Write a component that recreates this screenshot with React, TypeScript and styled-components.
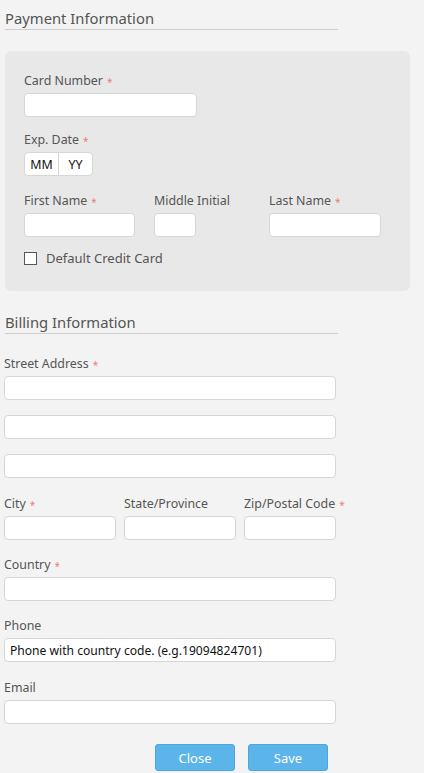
import React from "react";
import styled, { createGlobalStyle } from "styled-components";

const Global = createGlobalStyle`
  html, body { margin: 0; padding: 0; background: #f3f3f3; }
  body { font-family: "Segoe UI", "Noto Sans", "Open Sans", sans-serif; color: #555; }
  * { box-sizing: border-box; }
`;

const Page = styled.div`
  width: 424px;
  padding: 8px 0 0 0;
`;

const SectionTitle = styled.div`
  margin-left: 5px;
  width: 333px;
  font-size: 14.8px;
  color: #555;
  line-height: 20px;
  padding-bottom: 1px;
  border-bottom: 1px solid #cfcfcf;
`;

const Panel = styled.div`
  margin: 21px 0 0 5px;
  width: 405px;
  background: #e8e8e8;
  border-radius: 6px;
  padding: 22px 19px 24px 19px;
  display: flex;
  flex-direction: column;
`;

const Billing = styled.div`
  margin-top: 21px;
`;

const BillingBody = styled.div`
  padding: 22px 0 0 4px;
  display: flex;
  flex-direction: column;
`;

const Field = styled.div<{ $w?: number; $mt?: number }>`
  display: flex;
  flex-direction: column;
  width: ${(p) => (p.$w ? `${p.$w}px` : "auto")};
  margin-top: ${(p) => p.$mt ?? 0}px;
`;

const Label = styled.label`
  display: flex;
  align-items: center;
  font-size: 12.4px;
  line-height: 16px;
  height: 16px;
  margin-bottom: 4px;
  color: #555;
  white-space: nowrap;
`;

const Req = styled.span`
  color: #f07b7b;
  font-size: 10px;
  line-height: 10px;
  margin-left: 4px;
  position: relative;
  top: 1px;
`;

const Input = styled.input<{ $w: number }>`
  width: ${(p) => p.$w}px;
  height: 24px;
  border: 1px solid #d6d6d6;
  border-radius: 4px;
  background: #fff;
  font-family: "Segoe UI", "Noto Sans", "Open Sans", sans-serif;
  font-size: 12.1px;
  color: #111;
  padding: 0 5px;
  outline: none;
  &::placeholder { color: #111; }
`;

const Row = styled.div<{ $gap: number; $mt: number }>`
  display: flex;
  gap: ${(p) => p.$gap}px;
  margin-top: ${(p) => p.$mt}px;
`;

const ExpBox = styled.div`
  display: flex;
  width: 69px;
  height: 24px;
  border: 1px solid #d6d6d6;
  border-radius: 4px;
  background: #fff;
  overflow: hidden;
`;

const ExpPart = styled.div<{ $divider?: boolean }>`
  flex: 1;
  display: flex;
  align-items: center;
  justify-content: center;
  font-size: 12.4px;
  color: #111;
  border-right: ${(p) => (p.$divider ? "1px solid #d6d6d6" : "none")};
`;

const CheckRow = styled.label`
  display: flex;
  align-items: center;
  gap: 9px;
  margin-top: 12px;
  font-size: 13px;
  color: #555;
`;

const Box = styled.span`
  width: 13px;
  height: 13px;
  border: 1px solid #555;
  background: #fff;
  display: inline-block;
`;

const Buttons = styled.div`
  display: flex;
  gap: 13px;
  margin: 20px 0 0 155px;
`;

const Btn = styled.button`
  width: 80px;
  height: 27px;
  border: 1px solid #4aa6dd;
  border-radius: 3px;
  background: #5bb5ea;
  color: #fff;
  font-family: "Segoe UI", "Noto Sans", "Open Sans", sans-serif;
  font-size: 13px;
  padding: 0;
`;

export default function App() {
  return (
    <Page>
      <Global />
      <SectionTitle>Payment Information</SectionTitle>
      <Panel>
        <Field>
          <Label>Card Number<Req>*</Req></Label>
          <Input $w={173} />
        </Field>
        <Field $mt={15}>
          <Label>Exp. Date<Req>*</Req></Label>
          <ExpBox>
            <ExpPart $divider>MM</ExpPart>
            <ExpPart>YY</ExpPart>
          </ExpBox>
        </Field>
        <Row $gap={19} $mt={17}>
          <Field $w={111}>
            <Label>First Name<Req>*</Req></Label>
            <Input $w={111} />
          </Field>
          <Field $w={96}>
            <Label>Middle Initial</Label>
            <Input $w={42} />
          </Field>
          <Field $w={112}>
            <Label>Last Name<Req>*</Req></Label>
            <Input $w={112} />
          </Field>
        </Row>
        <CheckRow>
          <Box />
          Default Credit Card
        </CheckRow>
      </Panel>
      <Billing>
        <SectionTitle>Billing Information</SectionTitle>
        <BillingBody>
          <Field>
            <Label>Street Address<Req>*</Req></Label>
            <Input $w={332} />
            <Row $gap={0} $mt={15}><Input $w={332} /></Row>
            <Row $gap={0} $mt={15}><Input $w={332} /></Row>
          </Field>
          <Row $gap={8} $mt={18}>
            <Field $w={112}>
              <Label>City<Req>*</Req></Label>
              <Input $w={112} />
            </Field>
            <Field $w={112}>
              <Label>State/Province</Label>
              <Input $w={112} />
            </Field>
            <Field $w={92}>
              <Label>Zip/Postal Code<Req>*</Req></Label>
              <Input $w={92} />
            </Field>
          </Row>
          <Field $mt={17}>
            <Label>Country<Req>*</Req></Label>
            <Input $w={332} />
          </Field>
          <Field $mt={17}>
            <Label>Phone</Label>
            <Input $w={332} placeholder="Phone with country code. (e.g.19094824701)" />
          </Field>
          <Field $mt={18}>
            <Label>Email</Label>
            <Input $w={332} />
          </Field>
        </BillingBody>
      </Billing>
      <Buttons>
        <Btn>Close</Btn>
        <Btn>Save</Btn>
      </Buttons>
    </Page>
  );
}
